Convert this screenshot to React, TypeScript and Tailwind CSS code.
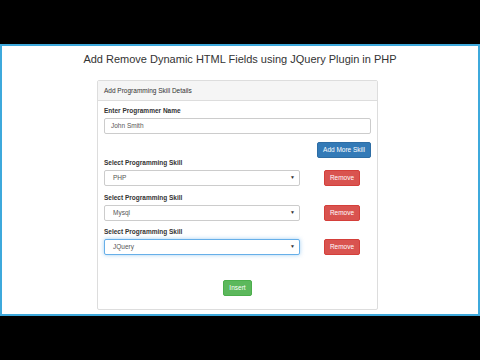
import React from "react";

const skills = [
    { value: "PHP", focused: false },
    { value: "Mysql", focused: false },
    { value: "JQuery", focused: true },
];

function SkillRow({ value, focused }: { value: string; focused: boolean }) {
    return (
        <div>
            <div className="h-[10px] leading-[10px] text-[6.5px] font-bold text-[#333]">Select Programming Skill</div>
            <div className="mt-[2px] flex items-center">
                <div
                    className={`w-[196px] h-[16px] flex items-center justify-between pl-[8px] pr-[4px] rounded-[2px] border bg-white text-[6.5px] text-[#555] ${
                        focused ? "border-[#66afe9] shadow-[0_0_4px_rgba(102,175,233,0.6)]" : "border-[#ccc]"
                    }`}
                >
                    <span>{value}</span>
                    <span className="text-[5px] text-[#333]">▼</span>
                </div>
                <button className="ml-[24px] w-[36px] h-[16px] rounded-[2px] bg-[#d9534f] border border-[#d43f3a] text-white text-[6.5px]">
                    Remove
                </button>
            </div>
        </div>
    );
}

export default function App() {
    return (
        <div
            className="w-[480px] h-[360px] bg-black flex flex-col"
            style={{ fontFamily: '"Liberation Sans", Arial, sans-serif' }}
        >
            <div className="h-[44px] shrink-0" />
            <div className="h-[272px] shrink-0 bg-white border-2 border-[#3ea9dc]">
                <h1 className="pt-[6.5px] text-center text-[11px] leading-[13px] text-[#333]">
                    Add Remove Dynamic HTML Fields using JQuery Plugin in PHP
                </h1>

                <div className="mt-[14.5px] ml-[95px] w-[281px] h-[230px] border border-[#ddd] rounded-[2px] bg-white">
                    <div className="h-[20px] flex items-center px-[6px] bg-[#f5f5f5] border-b border-[#ddd] text-[6.5px] text-[#333]">
                        Add Programming Skill Details
                    </div>

                    <div className="px-[6px] pt-[5px]">
                        <div className="h-[10px] leading-[10px] text-[6.5px] font-bold text-[#333]">Enter Programmer Name</div>
                        <div className="mt-[2px] h-[16px] flex items-center pl-[6px] rounded-[2px] border border-[#ccc] text-[6.5px] text-[#555]">
                            John Smith
                        </div>

                        <div className="mt-[8px] flex justify-end">
                            <button className="w-[54px] h-[16px] rounded-[2px] bg-[#337ab7] border border-[#2e6da4] text-white text-[6.5px]">
                                Add More Skill
                            </button>
                        </div>

                        <div className="flex flex-col gap-[6.5px]">
                            {skills.map((s, i) => (
                                <SkillRow key={i} value={s.value} focused={s.focused} />
                            ))}
                        </div>

                        <div className="mt-[25px] flex justify-center">
                            <button className="w-[29px] h-[16px] rounded-[2px] bg-[#5cb85c] border border-[#4cae4c] text-white text-[6.5px]">
                                Insert
                            </button>
                        </div>
                    </div>
                </div>
            </div>
        </div>
    );
}
